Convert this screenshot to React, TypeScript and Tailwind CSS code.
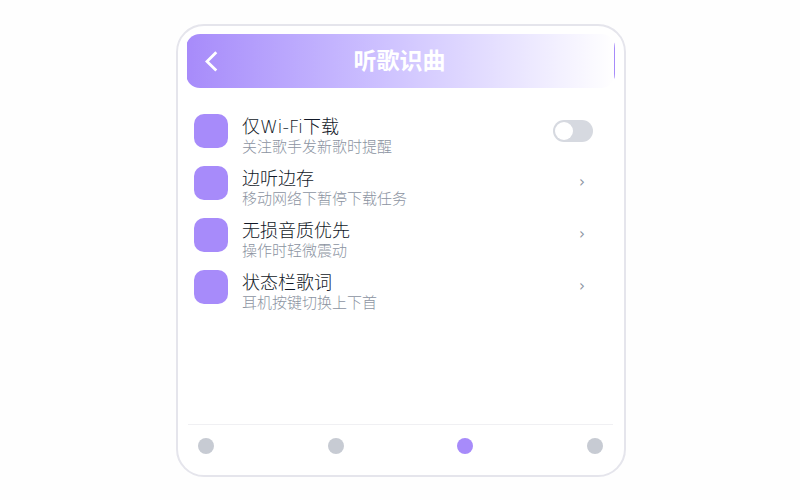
import { useState } from "react"

const settings = [
  { title: "仅Wi-Fi下载", desc: "关注歌手发新歌时提醒", toggle: true },
  { title: "边听边存", desc: "移动网络下暂停下载任务" },
  { title: "无损音质优先", desc: "操作时轻微震动" },
  { title: "状态栏歌词", desc: "耳机按键切换上下首" }
]

const tabs = ["首页", "发现", "设置", "我的"]

const dotClassNames = "block size-4 rounded-full"

const App = () => {
  const [wifiOnly, setWifiOnly] = useState(false)
  const [activeTab, setActiveTab] = useState(2)

  return (
    <div className="min-h-screen bg-[#fefefe] py-6 pr-4 pl-[18px] font-['DejaVu_Sans','Noto_Sans_CJK_SC',sans-serif]">
      <div className="mx-auto flex min-h-[453px] w-full max-w-[450px] flex-col rounded-[28px] border-2 border-[#e5e5ec] bg-white py-2 pr-[9px] pl-2">
        <header className="grid h-[54px] grid-cols-[24px_1fr_24px] items-center rounded-[14px] border border-transparent bg-linear-to-r from-[#a78bfa] to-white pr-[14px] pl-3 text-white">
          <button aria-label="返回" className="flex items-center justify-center">
            <svg
              className="size-6"
              viewBox="0 0 24 24"
              fill="none"
              stroke="currentColor"
              strokeWidth="2.8">
              <path d="M17.3 3.2 8 12.4l9.3 9.2" />
            </svg>
          </button>
          <h1 className="text-center text-[23px] leading-8 font-bold">
            听歌识曲
          </h1>
        </header>

        <ul className="flex-auto px-2 pt-[17px]">
          {settings.map((item) => (
            <li key={item.title} className="flex h-[52px] items-center gap-[14px]">
              <span className="size-[34px] rounded-[10px] bg-[#a78bfa]" />
              <div className="flex-auto pt-[11px] font-light">
                <p className="text-[18px] leading-5 text-[#111827]">
                  {item.title}
                </p>
                <p className="text-[15px] leading-5 text-[#8b93a1]">
                  {item.desc}
                </p>
              </div>
              {item.toggle ? (
                <label className="mr-[14px] cursor-pointer">
                  <input
                    type="checkbox"
                    aria-label={item.title}
                    checked={wifiOnly}
                    onChange={(e) => setWifiOnly(e.target.checked)}
                    className="peer sr-only"
                  />
                  <span className="flex h-[22px] w-10 rounded-full bg-[#d6d9e0] p-[2px] peer-checked:justify-end peer-checked:bg-[#a78bfa]">
                    <span className="size-[18px] rounded-full bg-white" />
                  </span>
                </label>
              ) : (
                <span className="mr-[22px] pb-[2px] text-[15px] leading-5 text-[#8b93a1]">
                  ›
                </span>
              )}
            </li>
          ))}
        </ul>

        <nav className="mx-[2px] flex h-[43px] items-center justify-between border-t border-[#f0f0f3] px-[10px]">
          {tabs.map((tab, index) => (
            <button
              key={tab}
              aria-label={tab}
              onClick={() => setActiveTab(index)}
              className={
                dotClassNames +
                (index === activeTab ? " bg-[#a78bfa]" : " bg-[#c7cbd3]")
              }
            />
          ))}
        </nav>
      </div>
    </div>
  )
}

export default App
